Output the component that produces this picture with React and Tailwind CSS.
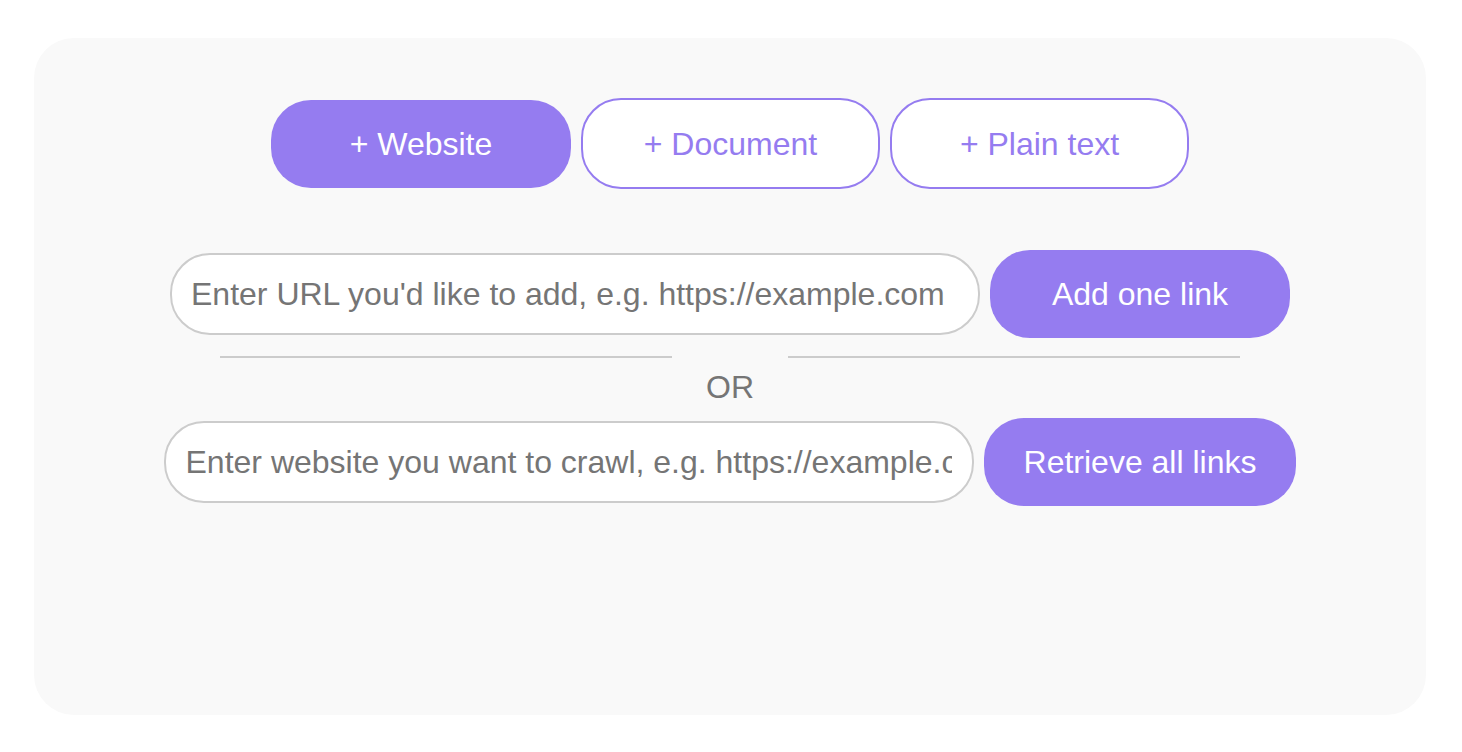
import React, { useState } from 'react';

const tabs = ['+ Website', '+ Document', '+ Plain text'];

const App = () => {
  const [active, setActive] = useState(0);

  return (
    <div className="min-h-screen bg-white pt-[38px] pl-[34px] pr-[36px] font-['Liberation_Sans',Arial,sans-serif]">
      <div className="h-[677px] rounded-[40px] bg-[#f9f9f9] pt-[60px] flex flex-col items-center">
        {/* source type tabs */}
        <div className="flex items-center gap-[10px] h-[91px]">
          {tabs.map((t, i) => (
            <button
              key={t}
              onClick={() => setActive(i)}
              className={
                i === active
                  ? 'w-[300px] h-[88px] rounded-[40px] bg-[#957cf0] text-white text-[32px]'
                  : 'w-[299px] h-[91px] rounded-[40px] border-2 border-[#957cf0] bg-white text-[#957cf0] text-[32px]'
              }
            >
              {t}
            </button>
          ))}
        </div>

        {/* single link */}
        <div className="mt-[61px] flex items-center gap-[10px] h-[88px]">
          <input
            type="text"
            placeholder="Enter URL you'd like to add, e.g. https://example.com"
            className="w-[810px] h-[82px] rounded-[40px] border-2 border-[#cccccc] bg-white pl-[19px] pr-4 text-[32px] text-[#333] placeholder:text-[#757575] outline-none"
          />
          <button className="min-w-[300px] h-[88px] px-10 rounded-[40px] bg-[#957cf0] text-white text-[32px]">
            Add one link
          </button>
        </div>

        {/* divider */}
        <div className="mt-[18px] flex gap-[116px]">
          <div className="w-[452px] h-[2px] bg-[#cccccc]" />
          <div className="w-[452px] h-[2px] bg-[#cccccc]" />
        </div>
        <div className="mt-[11px] text-[32px] leading-[36px] text-[#757575]">OR</div>

        {/* crawl website */}
        <div className="mt-[13px] flex items-center gap-[10px] h-[88px]">
          <input
            type="text"
            placeholder="Enter website you want to crawl, e.g. https://example.com"
            className="w-[810px] h-[82px] rounded-[40px] border-2 border-[#cccccc] bg-white pl-[20px] pr-5 text-[32px] text-[#333] placeholder:text-[#757575] outline-none"
          />
          <button className="min-w-[300px] h-[88px] px-10 rounded-[40px] bg-[#957cf0] text-white text-[32px]">
            Retrieve all links
          </button>
        </div>
      </div>
    </div>
  );
};

export default App;
